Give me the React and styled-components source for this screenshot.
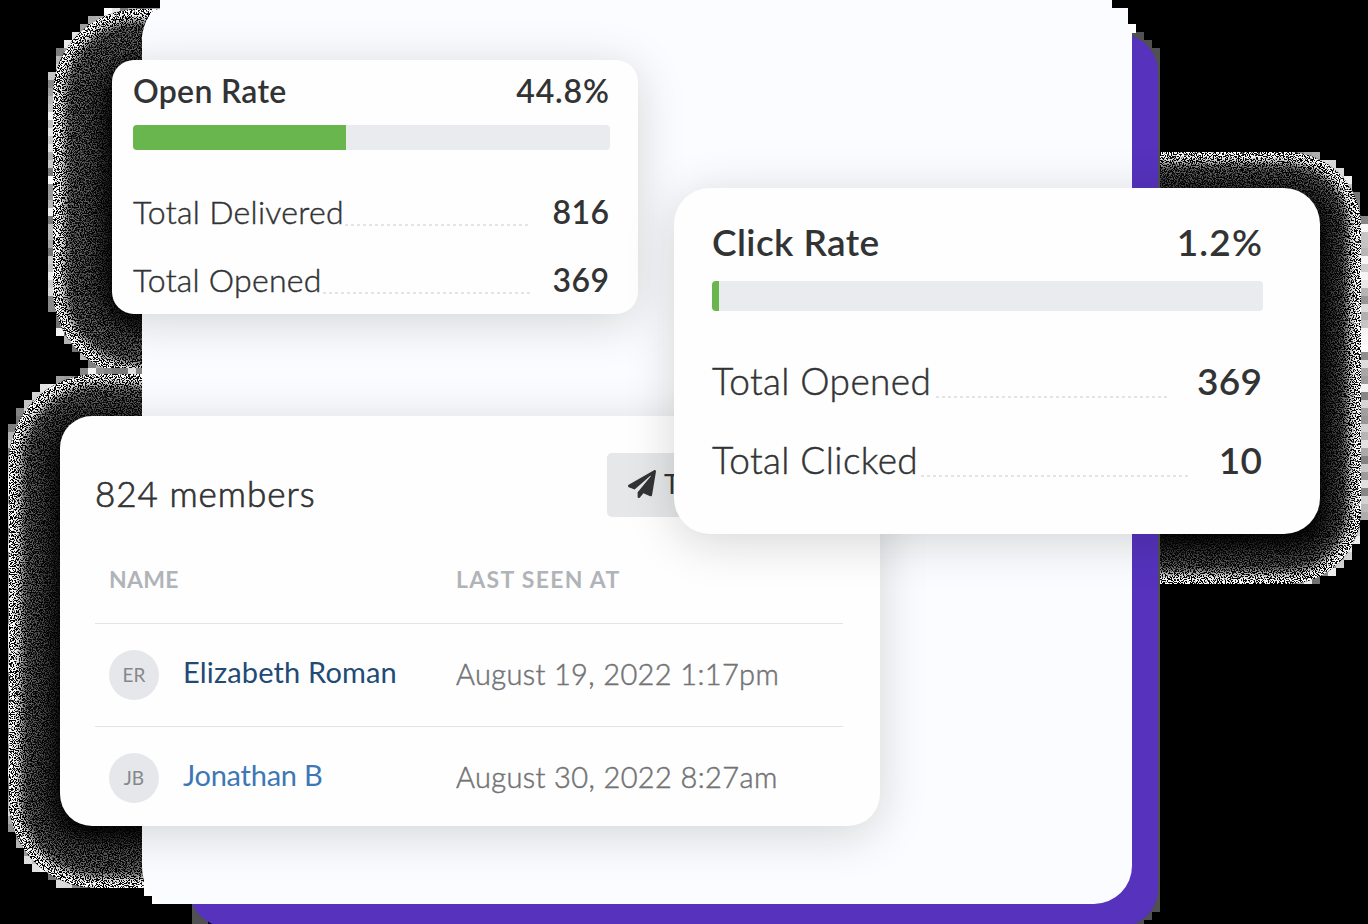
import React from "react";
import styled, { createGlobalStyle } from "styled-components";
import { FaPaperPlane } from "react-icons/fa";

const GlobalStyle = createGlobalStyle`
  * { box-sizing: border-box; }
  html, body { margin: 0; padding: 0; background: #000; }
  body { overflow: hidden; font-family: Lato, "Liberation Sans", sans-serif; }
`;

const Canvas = styled.main`
  position: relative;
  width: 1368px;
  height: 924px;
  overflow: hidden;
  background: #000;
  color: #323334;
`;

const Backdrop = styled.svg`
  position: absolute;
  inset: 0;
`;

const Card = styled.section`
  position: absolute;
  left: ${(p) => p.$x}px;
  top: ${(p) => p.$y}px;
  width: ${(p) => p.$w}px;
  height: ${(p) => p.$h}px;
  padding: ${(p) => p.$pad};
  border-radius: ${(p) => p.$r}px;
  background: #fefefe;
  box-shadow: 0 8px 48px rgba(10, 20, 14, 0.17);
  overflow: hidden;
`;

const RateHead = styled.header`
  display: flex;
  justify-content: space-between;
  height: ${(p) => p.$h}px;
  line-height: ${(p) => p.$lh}px;
  font-size: ${(p) => p.$size}px;
`;

const Strong = styled.span`
  font-weight: 600;
  letter-spacing: ${(p) => p.$ls || 0}px;
  margin-right: ${(p) => -(p.$ls || 0)}px;
  white-space: nowrap;
`;

const Track = styled.div`
  height: ${(p) => p.$h}px;
  margin-right: -0.5px;
  border-radius: 4px;
  background: #eaebee;
  overflow: hidden;
`;

const Fill = styled.div`
  height: 100%;
  background: #69b54e;
`;

const Stats = styled.div`
  margin-top: ${(p) => p.$mt}px;
`;

const StatRow = styled.div`
  display: flex;
  height: ${(p) => p.$h}px;
  line-height: 40px;
  font-size: ${(p) => p.$size}px;
`;

const StatLabel = styled.span`
  letter-spacing: ${(p) => p.$ls}px;
  font-weight: 300;
  white-space: nowrap;
  -webkit-text-stroke: 0.45px currentColor;
`;

const Leader = styled.span`
  flex: 1;
  height: 2px;
  margin: ${(p) => p.$top}px ${(p) => p.$gap}px 0 ${(p) => p.$lead}px;
  background: repeating-linear-gradient(90deg, #e3e4e5 0 3px, transparent 3px 6px);
`;

const MembersTop = styled.div`
  display: flex;
  justify-content: space-between;
  height: 112px;
`;

const MembersTitle = styled.h2`
  margin: 18px 0 0;
  font-size: 35px;
  line-height: 44px;
  font-weight: 300;
  letter-spacing: 1px;
  -webkit-text-stroke: 0.7px currentColor;
`;

const TestButton = styled.button`
  display: flex;
  align-items: flex-start;
  gap: 8px;
  width: 236px;
  height: 64px;
  padding: 17px 21px;
  border: 0;
  border-radius: 5px;
  background: #e5e7e9;
  color: #323334;
  font: 400 27px/28px Lato, sans-serif;
  white-space: nowrap;
`;

const Columns = styled.div`
  display: grid;
  grid-template-columns: 347px 1fr;
  padding-left: 14px;
  height: ${(p) => p.$h}px;
  border-bottom: ${(p) => (p.$last ? 0 : 1.5)}px solid #e3e4e5;
`;

const HeadCell = styled.span`
  color: #b0b4b8;
  font-size: 23px;
  line-height: 28px;
  font-weight: 700;
  letter-spacing: ${(p) => p.$ls}px;
`;

const Person = styled.div`
  display: flex;
  gap: 24px;
  padding-top: 26px;
`;

const Avatar = styled.span`
  width: 50px;
  height: 50px;
  border-radius: 50%;
  background: #e6e7ea;
  color: #85878a;
  font-size: 19px;
  line-height: 50px;
  text-align: center;
`;

const PersonName = styled.a`
  color: ${(p) => p.$color};
  font-size: 29px;
  line-height: 43px;
  letter-spacing: ${(p) => p.$ls}px;
`;

const Seen = styled.span`
  padding-top: 26px;
  color: #727375;
  font-size: 29px;
  line-height: 48px;
  font-weight: 300;
  -webkit-text-stroke: 0.5px currentColor;
  letter-spacing: ${(p) => p.$ls}px;
`;

const halos = [
  { id: "a", x: 53, y: 9, w: 644, h: 367, r: 86, card: [112, 60, 526, 254] },
  { id: "b", x: 9, y: 374, w: 931, h: 514, r: 88, card: [60, 416, 820, 410] },
  { id: "c", x: 615, y: 152, w: 746, h: 432, r: 74, card: [674, 188, 646, 346] },
];

// Squares of an 8px grid along the rim of a rounded rectangle.
function rimTiles({ x, y, w, h, r }) {
  const tiles = [];
  const distance = (px, py) => {
    const qx = Math.abs(px - x - w / 2) - w / 2 + r;
    const qy = Math.abs(py - y - h / 2) - h / 2 + r;
    return Math.hypot(Math.max(qx, 0), Math.max(qy, 0)) + Math.min(Math.max(qx, qy), 0) - r;
  };
  for (let ty = 0; ty < 924; ty += 8) {
    for (let tx = 0; tx < 1368; tx += 8) {
      if (Math.abs(distance(tx + 4, ty + 4)) < 4) {
        const seed = Math.sin(tx * 12.9 + ty * 78.2) * 43758.5;
        const shade = Math.round(110 + 145 * (seed - Math.floor(seed)));
        tiles.push({ tx, ty, shade });
      }
    }
  }
  return tiles;
}

function Halo({ halo }) {
  const { id, x, y, w, h, r } = halo;
  const [cx, cy, cw, ch] = halo.card;
  return (
    <g>
      {rimTiles(halo).map((t) => (
        <rect key={`${t.tx}-${t.ty}`} x={t.tx} y={t.ty} width="8" height="8" fill={`rgb(${t.shade},${t.shade},${t.shade})`} />
      ))}
      <mask id={`dim-${id}`} maskUnits="userSpaceOnUse" x="0" y="0" width="1368" height="924">
        <rect x={x} y={y} width={w} height={h} rx={r} fill="#fff" />
        <rect x={cx - 10} y={cy + 2} width={cw + 20} height={ch + 14} rx="36" fill="#000" filter="url(#soften-wide)" />
      </mask>
      <mask id={`rim-${id}`} maskUnits="userSpaceOnUse" x="0" y="0" width="1368" height="924">
        <rect x={x} y={y} width={w} height={h} rx={r} fill="#fff" />
        <rect x={x + 12} y={y + 11} width={w - 24} height={h - 22} rx={r - 10} fill="#000" filter="url(#soften)" />
      </mask>
      <rect x={x} y={y} width={w} height={h} rx={r} fill="#000" />
      <g mask={`url(#dim-${id})`}>
        <rect x={x} y={y} width={w} height={h} opacity="0.42" filter="url(#grain)" />
      </g>
      <g mask={`url(#rim-${id})`}>
        <rect x={x} y={y} width={w} height={h} filter="url(#grain-bright)" />
      </g>
    </g>
  );
}

function RateCard({ box, pad, head, bar, percent, title, value, titleLs, valueLs, stats, statsTop, rowH, size }) {
  const [x, y, w, h, r] = box;
  return (
    <Card $x={x} $y={y} $w={w} $h={h} $r={r} $pad={pad}>
      <RateHead $h={head} $lh={40} $size={size}>
        <Strong $ls={titleLs}>{title}</Strong>
        <Strong $ls={valueLs}>{value}</Strong>
      </RateHead>
      <Track $h={bar}>
        <Fill style={{ width: `${percent}%` }} />
      </Track>
      <Stats $mt={statsTop}>
        {stats.map((s) => (
          <StatRow key={s.label} $h={rowH} $size={size}>
            <StatLabel $ls={s.ls}>{s.label}</StatLabel>
            <Leader $top={s.top} $gap={s.gap} $lead={s.lead} />
            <Strong $ls={s.valueLs}>{s.value}</Strong>
          </StatRow>
        ))}
      </Stats>
    </Card>
  );
}

const members = [
  { initials: "ER", name: "Elizabeth Roman", color: "#214a75", ls: 0.16, seen: "August 19, 2022 1:17pm", seenLs: 0.36 },
  { initials: "JB", name: "Jonathan B", color: "#3d77b5", ls: -0.25, seen: "August 30, 2022 8:27am", seenLs: 0.38 },
];

export default function App() {
  return (
    <Canvas>
      <GlobalStyle />
      <Backdrop width="1368" height="924" viewBox="0 0 1368 924" aria-hidden="true">
        <defs>
          <filter id="soften" x="-20%" y="-20%" width="140%" height="140%">
            <feGaussianBlur stdDeviation="4" />
          </filter>
          <filter id="soften-wide" x="-20%" y="-20%" width="140%" height="140%">
            <feGaussianBlur stdDeviation="13" />
          </filter>
          <filter id="grain" x="0" y="0" width="100%" height="100%" colorInterpolationFilters="sRGB">
            <feTurbulence type="fractalNoise" baseFrequency="0.83" numOctaves="2" seed="7" />
            <feColorMatrix values="5 0 0 0 -2.1  5 0 0 0 -2.1  5 0 0 0 -2.1  0 0 0 0 1" />
          </filter>
          <filter id="grain-bright" x="0" y="0" width="100%" height="100%" colorInterpolationFilters="sRGB">
            <feTurbulence type="fractalNoise" baseFrequency="0.83" numOctaves="2" seed="7" />
            <feColorMatrix values="18 0 0 0 -8.2  18 0 0 0 -8.2  18 0 0 0 -8.2  0 0 0 0 1" />
          </filter>
        </defs>
        {halos.map((halo) => (
          <Halo key={halo.id} halo={halo} />
        ))}
        <path d="M1136 32h8v8h8v8h8v864h-8v8h-8v4h-20V32zM192 904h16v20h-16z" fill="#505050" />
        <rect x="189" y="34" width="969" height="893" rx="38" fill="#5632bd" />
        <path d="M1112 0v8h16v16h8v9h-4v40h-30V0zM144 866v30h8v8h40v-38z" fill="#fff" />
        <path d="M160 0H1112V8H1128V24Q1132 30 1132 38V866A38 38 0 0 1 1094 904H162Q142 890 142 866V36Q144 20 154 10L160 9z" fill="#fbfcff" />
      </Backdrop>

      <RateCard
        box={[112, 60, 526, 254, 22]}
        pad="11px 29px 0 21px"
        head={54}
        bar={25}
        percent={44.8}
        title="Open Rate"
        value="44.8%"
        titleLs={0.3}
        valueLs={0.9}
        size={32}
        statsTop={42}
        rowH={68}
        stats={[
          { label: "Total Delivered", ls: 0.3, value: "816", valueLs: 0.4, top: 32, gap: 23, lead: 1 },
          { label: "Total Opened", ls: 0.25, value: "369", valueLs: 0.4, top: 32, gap: 23, lead: 1 },
        ]}
      />

      <Card $x={60} $y={416} $w={820} $h={410} $r={32} $pad="37px 37px 0 35px">
        <MembersTop>
          <MembersTitle>824 members</MembersTitle>
          <TestButton>
            <FaPaperPlane size={28} />
            Test
          </TestButton>
        </MembersTop>
        <Columns $h={59}>
          <HeadCell $ls={0.3}>NAME</HeadCell>
          <HeadCell $ls={1.3}>LAST SEEN AT</HeadCell>
        </Columns>
        {members.map((m, i) => (
          <Columns key={m.initials} $h={103} $last={i === 1}>
            <Person>
              <Avatar>{m.initials}</Avatar>
              <PersonName $color={m.color} $ls={m.ls}>{m.name}</PersonName>
            </Person>
            <Seen $ls={m.seenLs}>{m.seen}</Seen>
          </Columns>
        ))}
      </Card>

      <RateCard
        box={[674, 188, 646, 346, 36]}
        pad="34px 58px 0 38px"
        head={59}
        bar={30}
        percent={1.3}
        title="Click Rate"
        value="1.2%"
        titleLs={0.4}
        valueLs={1.2}
        size={37}
        statsTop={50}
        rowH={79}
        stats={[
          { label: "Total Opened", ls: 0.4, value: "369", valueLs: 0.3, top: 35, gap: 28, lead: 5 },
          { label: "Total Clicked", ls: 0.4, value: "10", valueLs: 0.3, top: 35, gap: 28, lead: 3 },
        ]}
      />
    </Canvas>
  );
}
